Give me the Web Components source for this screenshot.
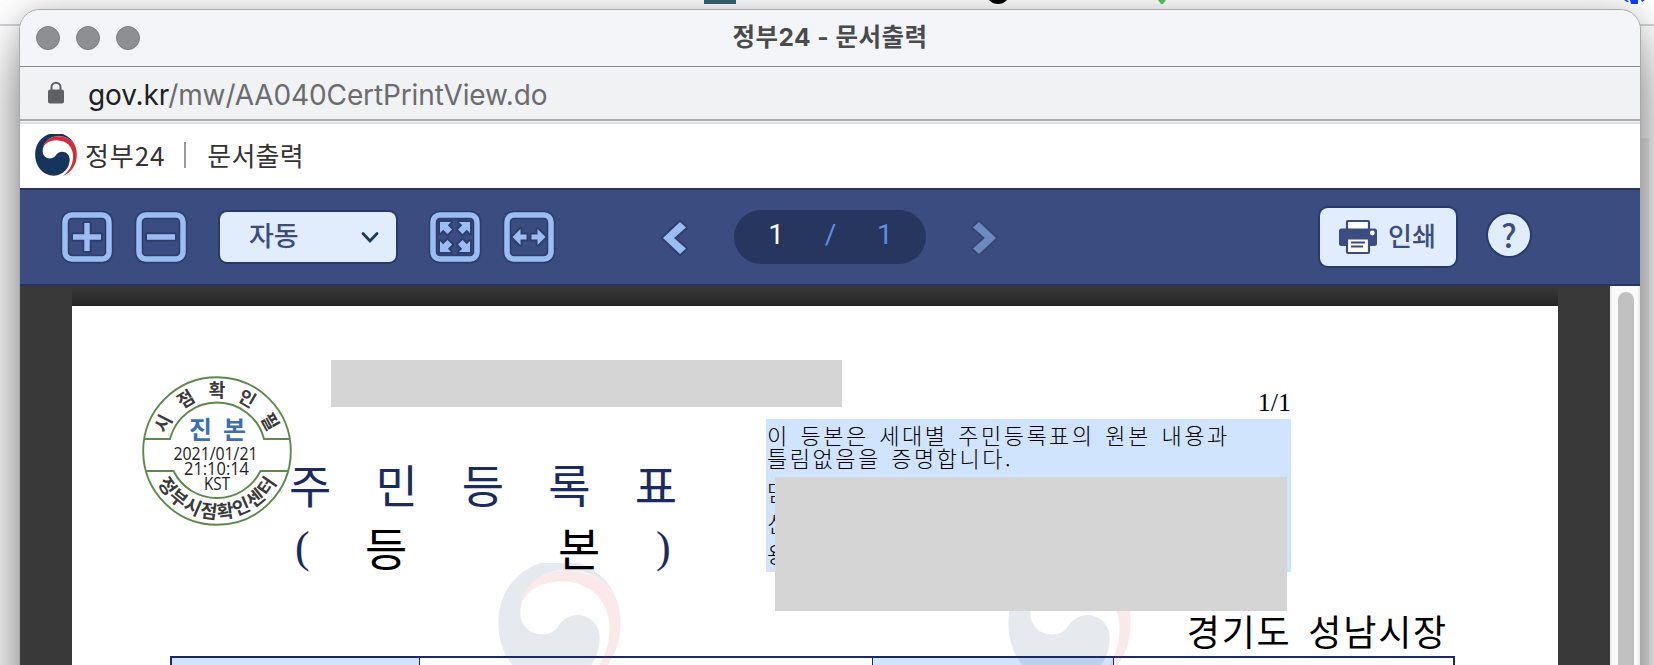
<!DOCTYPE html>
<html lang="ko">
<head>
<meta charset="utf-8">
<title>정부24 - 문서출력</title>
<style>
  :root {
    --font-ui: "Noto Sans CJK KR", sans-serif;
    --font-latin: Inter, "Noto Sans CJK KR", sans-serif;
    --font-doc: "Liberation Serif", "Noto Sans CJK KR", serif;
    --color-bar: #3b4c80;
    --color-bar-dark: #28365f;
    --color-ice: #e1edfc;
    --color-navy: #1b2b62;
    --color-paper-blue: #d0e4fd;
  }
  html, body {
    margin: 0;
    height: 100%;
    overflow: hidden;
    font-family: var(--font-ui);
  }
</style>
</head>
<body>
<gov-desktop>
  <gov-window heading="정부24 - 문서출력">
    <gov-address slot="address" host="gov.kr" path="/mw/AA040CertPrintView.do"></gov-address>
    <gov-header brand="정부24" page="문서출력"></gov-header>
    <gov-toolbar></gov-toolbar>
    <gov-viewer>
      <gov-certificate></gov-certificate>
    </gov-viewer>
  </gov-window>
</gov-desktop>

<script>
class GovElement extends HTMLElement {
  constructor() {
    super();
    this.attachShadow({ mode: "open" });
  }
  connectedCallback() {
    this.shadowRoot.innerHTML = this.render();
  }
}

// Background behind the popup window
class GovDesktop extends GovElement {
  render() {
    return `
    <style>
      :host{
        display:block;
        position:relative;
        box-sizing:border-box;
        height:665px;
        padding:10px 14px 0 20px;
        overflow:hidden;
        background:#fff;
      }
      .line{
        position:absolute;
        left:0; right:0; top:24px;
        height:1.5px;
        background:#d3d4da;
      }
      .edge{
        position:absolute;
        right:5px; top:138px; bottom:0;
        width:9px;
        background:rgba(0,0,0,.05);
      }
      svg{ position:absolute; left:0; top:0; }
    </style>
    <div class="line"></div>
    <div class="edge"></div>
    <slot></slot>
    <svg width="1654" height="6">
      <rect x="704" width="32" height="4" fill="#35596a"/>
      <circle cx="998" cy="-8" r="12" fill="#000"/>
      <path d="M1158 0h8l-3 4h-2z" fill="#4cb85c"/>
      <path d="M1624 0h3l2 2h-2zM1630 0h8v4h-7zM1641 0h4l-3 2z" fill="#0a3cff"/>
    </svg>
    `;
  }
}
customElements.define("gov-desktop", GovDesktop);

class GovWindow extends GovElement {
  render() {
    return `
    <style>
      :host{
        display:block;
        position:relative;
        height:700px;
        border-radius:20px 20px 0 0;
        box-shadow:0 0 0 1px #a9a9ab, 0 36px 60px rgba(0,0,0,.48), 0 0 30px rgba(0,0,0,.18);
        background:#fff;
        overflow:hidden;
      }
      .Title_Bar{
        display:grid;
        grid-template-columns:1fr auto 1fr;
        align-items:center;
        height:56px;
        background:#f4f5f9;
        border-bottom:1px solid #88898c;
      }
      .Dots{ display:flex; gap:16px; padding-left:16px; }
      .Dots i{
        box-sizing:border-box;
        width:24px; height:24px;
        border-radius:50%;
        background:#8e8f93;
        border:1px solid #7c7d80;
      }
      h1{
        margin:0 0 2px;
        font:700 24.500px/32px var(--font-latin);
        letter-spacing:.45px;
        color:#4a4b4d;
        white-space:pre;
      }
    </style>
    <div class="Title_Bar">
      <div class="Dots"><i></i><i></i><i></i></div>
      <h1>${this.getAttribute("heading")}</h1>
    </div>
    <slot name="address"></slot>
    <slot></slot>
    `;
  }
}
customElements.define("gov-window", GovWindow);

class GovAddress extends GovElement {
  render() {
    return `
    <style>
      :host{
        display:flex;
        align-items:center;
        box-sizing:border-box;
        height:57px;
        padding:0 0 4px 27px;
        background:#f1f2f4;
        border-bottom:2px solid #dfe0e4;
        box-shadow:inset 0 -1px #f4f4f6, inset 0 -3px #aaacb0;
      }
      .Url{
        margin:4px 0 0 23px;
        font:400 28px/34px Inter, sans-serif;
        letter-spacing:-.12px;
        color:#6b6c6f;
      }
      b{ font-weight:400; color:#202124; }
    </style>
    <svg width="18" height="24" viewBox="0 0 18 24">
      <path d="M4.500 10V6.200a4.500 4.500 0 0 1 9 0V10" fill="none" stroke="#5f6063" stroke-width="2"/>
      <rect x="1" y="8.500" width="16" height="14" rx="2" fill="#5f6063"/>
    </svg>
    <div class="Url"><b>${this.getAttribute("host")}</b>${this.getAttribute("path")}</div>
    `;
  }
}
customElements.define("gov-address", GovAddress);

// Taegeuk emblem, used for the logo and for the watermarks
class GovEmblem extends GovElement {
  render() {
    return `
    <style>
      :host{ display:block; }
      svg{ display:block; width:100%; height:100%; }
    </style>
    <svg viewBox="0 0 123 124">
      <path fill="#15355d" d="M116 30A61.5 61.5 0 0 0 0 61.5C0 97 25 123 55 123C84 121 102 100 102 75A22.4 22.4 0 0 0 80 52.5C70 52.5 64 58 60 64C56 70 50 72 43 72A21 21 0 0 1 22 50C23 25 42 8 65 7C88 5 105 16 116 30Z"/>
      <path fill="#d42c3a" d="M22 43C26 20 46 8 66 7C86 6 106 16 116 30C121 40 123 50 123 61.5C123 92 106 114 82 124C104 107 112 86 112 66C112 40 95 19 63 18.5C40 19 27 30 22 43Z"/>
    </svg>
    `;
  }
}
customElements.define("gov-emblem", GovEmblem);

class GovHeader extends GovElement {
  render() {
    return `
    <style>
      :host{
        display:flex;
        align-items:center;
        height:64px;
        padding-left:15px;
        background:#fff;
        font-size:26px;
        line-height:38px;
        letter-spacing:.2px;
        color:#333;
      }
      gov-emblem{ width:42px; height:42px; margin-bottom:2px; }
      span{ margin-bottom:3px; }
      .Brand{ margin-left:8px; letter-spacing:.9px; }
      .Bar{ width:2px; height:26px; margin:0 21px 2px 19px; background:#999; }
    </style>
    <gov-emblem></gov-emblem>
    <span class="Brand">${this.getAttribute("brand")}</span>
    <i class="Bar"></i>
    <span>${this.getAttribute("page")}</span>
    `;
  }
}
customElements.define("gov-header", GovHeader);

class GovToolButton extends GovElement {
  render() {
    const arrow = '<path d="M0 0H11L7.800 3.200L12 7.500L7.500 12L3.200 7.800L0 11Z"/>';
    const icons = {
      plus: '<path d="M22.300 11h5.400v11.300h11.300v5.400h-11.300v11.300h-5.400v-11.300h-11.300v-5.400h11.300z"/>',
      minus: '<path d="M11 22.300h28v5.400h-28z"/>',
      fit: `<g transform="translate(10 10)">${arrow}</g>
        <g transform="translate(40 10) scale(-1 1)">${arrow}</g>
        <g transform="translate(10 40) scale(1 -1)">${arrow}</g>
        <g transform="translate(40 40) scale(-1 -1)">${arrow}</g>`,
      width: '<path d="M8.500 25l8-8v5.500h6v5h-6V33zM41.500 25l-8-8v5.500h-6v5h6V33z"/>'
    };
    const icon = icons[this.getAttribute("icon")];
    return `
    <style>
      :host{ display:block; width:50px; height:50px; }
      svg{ display:block; overflow:visible; }
    </style>
    <svg width="50" height="50">
      <g stroke="#2c3f6e" stroke-linejoin="round" fill="none">
        <rect x="3" y="3" width="44" height="44" rx="7" stroke-width="9"/>
        <g stroke-width="4">${icon}</g>
      </g>
      <rect x="3" y="3" width="44" height="44" rx="7" stroke="#9bbdf2" stroke-width="5.500" fill="none"/>
      <g fill="#9bbdf2">${icon}</g>
    </svg>
    `;
  }
}
customElements.define("gov-tool-button", GovToolButton);

class GovToolbar extends GovElement {
  render() {
    return `
    <style>
      :host{
        display:flex;
        align-items:center;
        box-sizing:border-box;
        height:98px;
        padding:0 110px 0 42px;
        background:var(--color-bar);
        border-top:2px solid var(--color-bar-dark);
        border-bottom:2px solid var(--color-bar-dark);
      }
      .Group{ display:flex; gap:24px; }
      .Select{
        display:flex;
        align-items:center;
        justify-content:space-between;
        box-sizing:border-box;
        width:176px; height:50px;
        margin:0 34px 0 34px;
        padding:0 17px 0 29px;
        border-radius:7px;
        background:var(--color-ice);
        box-shadow:0 0 0 2px #263b69;
        font-size:27px;
        font-weight:500;
        line-height:36px;
        color:var(--color-bar);
      }
      .Select span{ margin-bottom:4px; }
      .Prev{ margin-left:109px; }
      .Pager{
        display:grid;
        grid-template-columns:1fr 1fr 1fr;
        box-sizing:border-box;
        width:192px; height:54px;
        margin:0 46px 0 47px;
        padding:0 14px 5px 15px;
        border-radius:27px;
        background:#27365e;
        font:400 28px/50px Roboto, sans-serif;
        color:#5d8fdc;
        text-align:center;
      }
      .Pager b{ font-weight:400; color:#fff; }
      .Print{
        display:flex;
        align-items:center;
        box-sizing:border-box;
        width:136px; height:58px;
        margin:0 32px 0 auto;
        padding-left:19px;
        border-radius:8px;
        background:var(--color-ice);
        box-shadow:0 0 0 2px #263b69;
        font-size:26px;
        font-weight:500;
        line-height:36px;
        color:var(--color-bar);
      }
      .Print span{ margin:0 0 4px 11px; }
      .Help{
        width:42px; height:42px;
        margin-bottom:4px;
        border-radius:50%;
        background:var(--color-ice);
        box-shadow:0 0 0 2px #263b69;
        font-size:32px;
        font-weight:500;
        line-height:40px;
        text-align:center;
        color:var(--color-bar);
      }
      svg{ display:block; overflow:visible; flex:none; }
      .Arrow{ margin-top:2px; }
    </style>
    <div class="Group">
      <gov-tool-button icon="plus"></gov-tool-button>
      <gov-tool-button icon="minus"></gov-tool-button>
    </div>
    <div class="Select">
      <span>자동</span>
      <svg width="18" height="12"><path d="M2 2.500l7 7.500 7-7.500" fill="none" stroke="#173764" stroke-width="2.800" stroke-linecap="round"/></svg>
    </div>
    <div class="Group">
      <gov-tool-button icon="fit"></gov-tool-button>
      <gov-tool-button icon="width"></gov-tool-button>
    </div>
    <svg class="Arrow Prev" width="24" height="32">
      <path d="M0 16L17 0l6 5.500L11 16l12 10.500L17 32z" fill="#9bbdf2" stroke="#2c3f6e" stroke-width="4" paint-order="stroke" stroke-linejoin="round"/>
    </svg>
    <div class="Pager"><b>1</b><span>/</span><span>1</span></div>
    <svg class="Arrow" width="24" height="32">
      <path d="M24 16L7 0L1 5.500L13 16L1 26.500L7 32z" fill="#6e89bd" stroke="#344675" stroke-width="4" paint-order="stroke" stroke-linejoin="round"/>
    </svg>
    <div class="Print">
      <svg width="38" height="34">
        <rect x="8" y="1" width="22" height="12" rx="1" fill="#fff" stroke="#3b4c80" stroke-width="2.200"/>
        <rect y="8.500" width="38" height="17.500" rx="2.500" fill="#3b4c80"/>
        <rect x="8" y="18.500" width="22" height="14.500" rx="1" fill="#fff" stroke="#3b4c80" stroke-width="2.200"/>
        <path d="M12 22.500h14M12 26.500h12" stroke="#3b4c80" stroke-width="2"/>
        <circle cx="33.300" cy="13" r="2.400" fill="#fff"/>
      </svg>
      <span>인쇄</span>
    </div>
    <div class="Help">?</div>
    `;
  }
}
customElements.define("gov-toolbar", GovToolbar);

class GovViewer extends GovElement {
  render() {
    return `
    <style>
      :host{
        display:flex;
        height:420px;
        background:#393939;
      }
      .Pane{
        flex:1;
        margin:0 52px;
        padding-top:20px;
        background:linear-gradient(#393939, #252525 20px);
      }
      .Track{
        box-sizing:border-box;
        width:30px;
        padding:6px 4px 0 6px;
        border-left:2px solid #ececec;
        border-right:2px solid #ececec;
        background:#fafafa;
      }
      .Thumb{
        width:16px; height:400px;
        border-radius:8px;
        background:#c1c1c1;
      }
    </style>
    <div class="Pane"><slot></slot></div>
    <div class="Track"><div class="Thumb"></div></div>
    `;
  }
}
customElements.define("gov-viewer", GovViewer);

// Round time stamp seal
class GovSeal extends GovElement {
  render() {
    return `
    <style>
      :host{ display:block; width:150px; height:150px; }
      svg{ display:block; font-family:"Noto Sans CJK KR", sans-serif; }
      .Date{ font-family:"Open Sans", "Noto Sans", sans-serif; }
    </style>
    <svg width="150" height="150" viewBox="-75 -75 150 150" fill="none">
      <g stroke="#5d8a4c" stroke-width="1.900">
        <circle r="73.800"/>
        <path d="M-73-12H-47A48.500 48.500 0 0 1 47-12H73M-71 20H-43.500A48.500 48.500 0 0 0 43.500 20H71"/>
      </g>
      <path id="bottom" d="M-67.500 0A67.500 67.500 0 0 0 67.500 0"/>
      <g font-size="18" font-weight="700" fill="#3a3a3a" text-anchor="middle">
        <text transform="rotate(-63) translate(0 -54)">시</text>
        <text transform="rotate(-31) translate(0 -54)">점</text>
        <text transform="rotate(0) translate(0 -54)">확</text>
        <text transform="rotate(30) translate(0 -54)">인</text>
        <text transform="rotate(61) translate(0 -54)">필</text>
        <text font-size="18.500"><textPath href="#bottom" startOffset="50%" textLength="146">정부시점확인센터</textPath></text>
      </g>
      <g font-size="25" font-weight="700" fill="#3a6fb3" text-anchor="middle">
        <text x="-16.500" y="-12.500">진</text>
        <text x="17.500" y="-12.500">본</text>
      </g>
      <g class="Date" font-size="17.500" fill="#222">
        <text x="-43.500" y="8.500" textLength="84" lengthAdjust="spacingAndGlyphs">2021/01/21</text>
        <text x="-33" y="23.500" textLength="65" lengthAdjust="spacingAndGlyphs">21:10:14</text>
        <text x="-13" y="38.500" textLength="26" lengthAdjust="spacingAndGlyphs">KST</text>
      </g>
    </svg>
    `;
  }
}
customElements.define("gov-seal", GovSeal);

class GovCertificate extends GovElement {
  render() {
    return `
    <style>
      :host{
        display:block;
        position:relative;
        box-sizing:border-box;
        height:400px;
        padding-top:80px;
        overflow:hidden;
        background:#fff;
        font-family:var(--font-doc);
        color:#000;
      }
      gov-seal{ position:absolute; left:70px; top:70px; }
      .Mark{
        position:absolute;
        top:257px;
        width:123px; height:123px;
        opacity:.1;
      }
      .Mark.a{ left:426px; }
      .Mark.b{ left:936px; }
      .Mask{ position:absolute; background:#d5d5d5; }
      .Mask.top{ left:259px; top:54px; width:511px; height:47px; }
      .Mask.info{ left:9px; top:58px; width:512px; height:134px; }
      .Head{ display:flex; height:186px; }
      .Title{
        width:388px;
        padding:70px 0 0 217px;
        font-size:46px;
        line-height:63px;
        color:var(--color-navy);
      }
      .Title div{ display:flex; justify-content:space-between; }
      .Title .Sub{
        display:grid;
        grid-template-columns:76px 193px 92px auto;
        justify-content:start;
      }
      .Sub b{ font-weight:400; color:#000; }
      .Sub i{ font-style:normal; font-size:44px; padding-left:6px; line-height:58px; }
      .Proof{ width:525px; margin-left:89px; }
      .Page{
        height:33px;
        font-size:26px;
        line-height:33px;
        text-align:right;
      }
      .Box{
        position:relative;
        box-sizing:border-box;
        height:153px;
        padding:4px 0 0 1px;
        background:var(--color-paper-blue);
        font-family:"Noto Sans CJK KR", sans-serif;
        font-weight:300;
        font-size:22px;
        line-height:22.500px;
        letter-spacing:2.500px;
        word-spacing:2px;
        white-space:nowrap;
      }
      .Box p{ margin:0; }
      .Box p.Gap{ margin-top:12px; }
      .Box p.Item{ height:31px; }
      .Sign{
        height:46px;
        margin-top:38px;
        padding-right:110px;
        font-size:36px;
        line-height:48px;
        letter-spacing:1.800px;
        word-spacing:6px;
        text-align:right;
      }
      .Table{
        display:grid;
        grid-template-columns:247px 453px 241px 1fr;
        box-sizing:border-box;
        width:1285px; height:60px;
        margin-left:98px;
        border:2px solid var(--color-navy);
      }
      .Table div + div{ border-left:1.500px solid var(--color-navy); }
      .Table .Key{ background:var(--color-paper-blue); }
    </style>
    <gov-emblem class="Mark a"></gov-emblem>
    <gov-emblem class="Mark b"></gov-emblem>
    <div class="Head">
      <div class="Title">
        <div><span>주</span><span>민</span><span>등</span><span>록</span><span>표</span></div>
        <div class="Sub"><i>(</i><b>등</b><b>본</b><i>)</i></div>
      </div>
      <div class="Proof">
        <div class="Page">1/1</div>
        <div class="Box">
          <p>이 등본은 세대별 주민등록표의 원본 내용과</p>
          <p>틀림없음을 증명합니다.</p>
          <p class="Item Gap">담</p>
          <p class="Item">신</p>
          <p class="Item">용</p>
          <div class="Mask info"></div>
        </div>
      </div>
    </div>
    <div class="Sign">경기도 성남시장</div>
    <div class="Table">
      <div class="Key"></div><div></div><div class="Key"></div><div></div>
    </div>
    <div class="Mask top"></div>
    <gov-seal></gov-seal>
    `;
  }
}
customElements.define("gov-certificate", GovCertificate);
</script>
</body>
</html>
